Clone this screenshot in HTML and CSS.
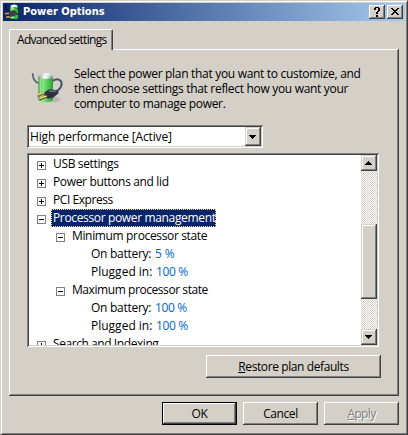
FILE: index.html
```html
<!DOCTYPE html>
<html lang="en">
<head>
<meta charset="utf-8">
<title>Power Options</title>
<link rel="stylesheet" href="styles.css">
</head>
<body>
<main class="window">
  <header class="titlebar">
    <svg class="app-icon" viewBox="0 0 16 16">
      <path d="M1 0V3Q1 6 5 7" fill="none" stroke="#101820" stroke-width="1.3"/>
      <rect x="5" y="1" width="8" height="14" rx="1.5" fill="#35b83f"/>
      <rect x="6" y="2" width="3" height="12" fill="#8cec86"/>
      <path d="M6 1.5Q9-.5 12 1.5V3H6Z" fill="#eef3ee"/>
      <path d="M12 5Q16 4 15 8Q14 11 11 10" fill="none" stroke="#263238" stroke-width="1.5"/>
      <path d="M4 8L8 6L12 8L10 12L5 13Z" fill="#3a4045"/>
      <path d="M0 9.5H4M1 13H5" stroke="#e0a43c" stroke-width="1.4"/>
    </svg>
    <h1>Power Options</h1>
    <button class="raised caption-btn help"><svg viewBox="0 0 16 14" shape-rendering="crispEdges"><path d="M6 2h4v1H6zM5 3h2v2H5zM9 3h2v3H9zM8 6h2v1H8zM7 7h2v2H7zM7 10h2v2H7z"/></svg></button>
    <button class="raised caption-btn close"><svg viewBox="0 0 16 14" shape-rendering="crispEdges"><path d="M4 3h2v1h1v1h2V4h1V3h2v1h-1v1h-1v1H9v1h1v1h1v1h1v1h-2V9H9V8H7v1H6v1H4V9h1V8h1V7h1V6H6V5H5V4H4z"/></svg></button>
  </header>

  <div class="tab"><span class="t-tab">Advanced settings</span></div>

  <section class="pane">
    <div class="intro">
      <svg class="battery" viewBox="0 0 135 135">
        <defs>
          <linearGradient id="body"><stop offset="0" stop-color="#3c9e3c"/><stop offset=".3" stop-color="#8ee58a"/><stop offset=".55" stop-color="#5fd45f"/><stop offset="1" stop-color="#2f9a35"/></linearGradient>
          <linearGradient id="cap"><stop offset="0" stop-color="#8f9aa2"/><stop offset=".45" stop-color="#fff"/><stop offset="1" stop-color="#8d98a4"/></linearGradient>
        </defs>
        <ellipse cx="82" cy="112" rx="24" ry="9" fill="#aaa69e" opacity=".6"/>
        <path d="M23 34Q23 58 41 64" fill="none" stroke="#565d78" stroke-width="5"/>
        <path d="M81 59C92 48 110 50 110 66C110 80 98 83 91 93" fill="none" stroke="#4b526c" stroke-width="6"/>
        <path d="M40 43V115Q62 127 84 115V43Z" fill="url(#body)"/>
        <path d="M46 51V113" stroke="#b5f2ae" stroke-width="4" opacity=".7"/>
        <ellipse cx="62" cy="44" rx="22" ry="7" fill="url(#cap)"/>
        <path d="M54 35Q64 29 74 35V41Q64 45 54 41Z" fill="#e9f0f8"/>
        <path d="M58 91L73 82L98 85L101 94L84 107L68 110L58 103Z" fill="#2d3040"/>
        <path d="M72 87L94 88" stroke="#737684" stroke-width="4"/>
        <path d="M37 101L58 94M43 112L65 104" stroke="#765d31" stroke-width="8"/>
        <path d="M37 99L58 92M43 110L65 102" stroke="#f1cf8c" stroke-width="4"/>
      </svg>
      <p>Select the power plan that you want to customize, and<br>then choose settings that reflect how you want your<br>computer to manage power.</p>
    </div>

    <div class="sunken combo">
      <span class="t-combo">High performance [Active]</span>
      <button class="scroll-btn"><svg viewBox="0 0 7 4" shape-rendering="crispEdges"><path d="M0 0h7v1H6v1H5v1H4v1H3V3H2V2H1V1H0z"/></svg></button>
    </div>

    <div class="sunken list">
      <ul class="tree">
        <li><i class="box plus"></i><span class="label">USB settings</span></li>
        <li><i class="box plus"></i><span class="label">Power buttons and lid</span></li>
        <li><i class="box plus"></i><span class="label tight">PCI Express</span></li>
        <li><i class="box"></i><span class="label selected">Processor power management</span></li>
        <li class="sub"><i class="box"></i><span class="label">Minimum processor state</span></li>
        <li class="leaf battery-row"><span>On battery:</span><b class="short">5 %</b></li>
        <li class="leaf plugged-row"><span>Plugged in:</span><b>100 %</b></li>
        <li class="sub"><i class="box"></i><span class="label tight">Maximum processor state</span></li>
        <li class="leaf battery-row"><span>On battery:</span><b>100 %</b></li>
        <li class="leaf plugged-row"><span>Plugged in:</span><b>100 %</b></li>
        <li><i class="box plus"></i><span class="label tight">Search and Indexing</span></li>
      </ul>
      <div class="scrollbar">
        <button class="scroll-btn"><svg viewBox="0 0 7 4" shape-rendering="crispEdges"><path d="M3 0h1v1h1v1h1v1h1v1H0V3h1V2h1V1h1z"/></svg></button>
        <div class="scroll-btn thumb"></div>
        <button class="scroll-btn"><svg viewBox="0 0 7 4" shape-rendering="crispEdges"><path d="M0 0h7v1H6v1H5v1H4v1H3V3H2V2H1V1H0z"/></svg></button>
      </div>
    </div>

    <button class="raised push restore"><u>R</u>estore plan defaults</button>
  </section>

  <footer>
    <div class="default"><button class="raised push">OK</button></div>
    <button class="raised push">Cancel</button>
    <button class="raised push" disabled><u>A</u>pply</button>
  </footer>
</main>
</body>
</html>
```
FILE: styles.css
```css
* { box-sizing: border-box; margin: 0; padding: 0; }
body {
  width: 408px;
  height: 435px;
  overflow: hidden;
  font: 12px/15px "Open Sans", "Noto Sans", sans-serif;
  color: #000;
  background: #d4d0c8;
}
span, b, h1 { white-space: nowrap; }
button { font: inherit; color: inherit; background: #d4d0c8; border: 0; }
svg { display: block; }

.window {
  width: 408px;
  height: 435px;
  padding: 2px 1px 1px 2px;
  border: 1px solid;
  border-color: #d4d0c8 #404040 #404040 #d4d0c8;
  box-shadow: inset 1px 1px #fff, inset -1px -1px #808080;
}
.titlebar {
  display: flex;
  align-items: center;
  width: 402px;
  height: 18px;
  padding: 0 2px;
  background: linear-gradient(90deg, #0a246a, #a6caf0);
}
.app-icon { width: 16px; height: 16px; }
h1 {
  flex: 1;
  padding-left: 2px;
  font: bold 11px/16px "DejaVu Sans Condensed", "DejaVu Sans", sans-serif;
  color: #fff;
}

.raised {
  background: #d4d0c8;
  box-shadow: inset -1px -1px #404040, inset 1px 1px #fff, inset -2px -2px #808080;
}
.caption-btn { width: 16px; height: 14px; }
.caption-btn svg { width: 16px; height: 14px; }
.close { margin-left: 2px; }

.tab {
  position: relative;
  z-index: 1;
  width: 104px;
  height: 21px;
  margin: 8px 0 0 6px;
  padding: 2px 0 0 7px;
  background: #d4d0c8;
  border: 1px solid;
  border-color: #fff #404040 transparent #fff;
  border-bottom: 0;
  border-radius: 2px 2px 0 0;
  box-shadow: inset -1px 0 #808080;
  letter-spacing: -.71px;
}
.pane {
  width: 390px;
  height: 347px;
  margin: -1px 0 0 6px;
  padding: 17px 18px 0;
  box-shadow: inset -1px -1px #404040, inset 1px 1px #fff, inset -2px -2px #808080;
}
.intro { display: flex; height: 59px; letter-spacing: -.31px; }
.battery { flex: none; width: 45px; height: 45px; margin: -4px 0 0 -2px; }
.intro p { padding-left: 4px; white-space: nowrap; }

.sunken {
  display: flex;
  padding: 2px;
  background: #fff;
  box-shadow: inset 1px 1px #808080, inset -1px -1px #fff, inset 2px 2px #404040, inset -2px -2px #d4d0c8;
}
.combo { width: 236px; height: 23px; justify-content: space-between; letter-spacing: -.17px; }
.combo > span { padding: 2px 0 0 1px; }
.scroll-btn {
  display: flex;
  flex: none;
  align-items: center;
  justify-content: center;
  width: 16px;
  height: 16px;
  background: #d4d0c8;
  box-shadow: inset -1px -1px #404040, inset 1px 1px #d4d0c8, inset -2px -2px #808080, inset 2px 2px #fff;
}
.scroll-btn svg { width: 7px; height: 4px; margin-right: 1px; fill: #000; }
.combo .scroll-btn { height: 19px; }

.list { width: 352px; height: 194px; margin-top: 5px; }
.tree { flex: 1; height: 190px; overflow: hidden; list-style: none; }
.tree li { display: flex; height: 18px; padding-left: 8px; line-height: 18px; letter-spacing: -.35px; }
.tree .sub { padding-left: 27px; }
.tree .leaf { padding-left: 62px; }
.tree .tight { letter-spacing: -.43px; }
.battery-row span { width: 64px; letter-spacing: -.27px; }
.plugged-row span { width: 65px; letter-spacing: 0; }
.leaf b { font-weight: normal; color: #0066cc; }
.leaf .short { letter-spacing: -.1px; }
.box {
  flex: none;
  width: 9px;
  height: 9px;
  margin-top: 6px;
  border: 1px solid #808080;
  background: linear-gradient(#000, #000) 1px 3px / 5px 1px no-repeat;
}
.plus {
  background:
    linear-gradient(#000, #000) 1px 3px / 5px 1px no-repeat,
    linear-gradient(#000, #000) 3px 1px / 1px 5px no-repeat;
}
.label { margin-left: 5px; padding: 0 2px; }
.selected {
  width: 165px;
  color: #fff;
  background: #0a246a;
  outline: 1px dotted #f5db95;
  outline-offset: -1px;
}
.scrollbar {
  display: flex;
  flex-direction: column;
  justify-content: space-between;
  width: 16px;
  height: 190px;
  background: repeating-conic-gradient(#fff 0 25%, #d4d0c8 0 50%) 0 0 / 2px 2px;
}
.thumb { height: 75px; margin-bottom: -23px; }

.push { display: block; width: 75px; height: 23px; text-align: center; letter-spacing: -.4px; }
.restore { width: 175px; margin: 8px 0 0 179px; }
footer { display: flex; gap: 6px; margin: 6px 0 0 159px; }
.default { border: 1px solid #000; height: 23px; }
.default .push { width: 73px; height: 21px; }
.push:disabled { color: #808080; text-shadow: 1px 1px #fff; letter-spacing: -.65px; }
```
